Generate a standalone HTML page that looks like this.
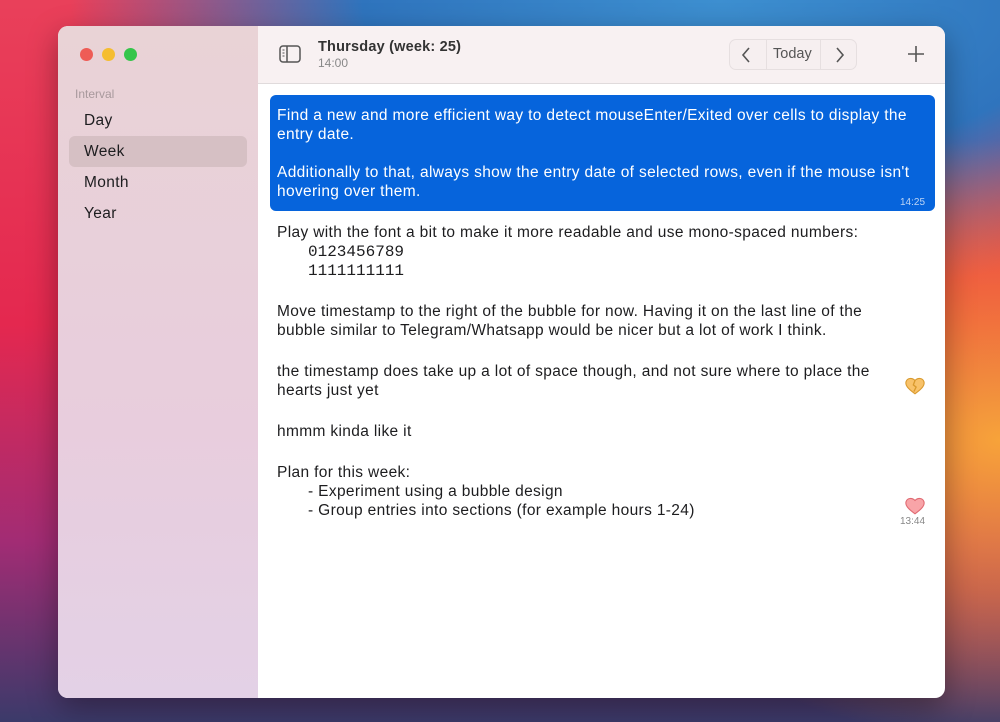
<!DOCTYPE html>
<html><head><meta charset="utf-8"><style>
*{margin:0;padding:0;box-sizing:border-box}
body{width:1000px;height:722px;overflow:hidden;position:relative;font-family:"Liberation Sans",sans-serif;
background:
radial-gradient(ellipse 420px 300px at 1000px 440px,#f7a33a 0%,rgba(247,140,50,0.6) 50%,rgba(0,0,0,0) 100%),
radial-gradient(ellipse 650px 300px at 720px 0px,#3d8fd0 0%,#2f74bd 55%,rgba(0,0,0,0) 100%),
linear-gradient(180deg,#e9405a 0%,#e4284f 45%,#a22c74 75%,#3b3a6a 100%);}
.win{position:absolute;left:58px;top:26px;width:887px;height:672px;border-radius:10px;overflow:hidden;background:#fff;box-shadow:0 10px 30px rgba(0,0,0,.35)}
.side{position:absolute;left:0;top:0;width:200px;height:672px;background:linear-gradient(180deg,#e9d3d6 0%,#e8cddd 60%,#e3d1e6 100%)}
.dot{position:absolute;top:22px;width:13px;height:13px;border-radius:50%}
.hdr{position:absolute;left:200px;top:0;right:0;height:58px;background:#f8f1f2;border-bottom:1px solid #e0dbdc}
.t{position:absolute;white-space:nowrap;font-size:15.5px;letter-spacing:0.35px;color:#1d1d1f}
.b{color:#fff}
.m{font-family:"Liberation Mono",monospace;font-size:16px;letter-spacing:0}
</style></head><body>
<div class="win">
 <div class="side">
  <div class="dot" style="left:22px;background:#ee5c56"></div>
  <div class="dot" style="left:44px;background:#f5bd30"></div>
  <div class="dot" style="left:66px;background:#35c54a"></div>
  <div class="t" style="left:17px;top:61px;font-size:12px;letter-spacing:0;color:#a8999c">Interval</div>
  <div style="position:absolute;left:11px;top:110px;width:178px;height:31px;border-radius:6px;background:#d6c0c4"></div>
  <div class="t" style="left:26px;top:86px">Day</div>
  <div class="t" style="left:26px;top:117px">Week</div>
  <div class="t" style="left:26px;top:148px">Month</div>
  <div class="t" style="left:26px;top:179px">Year</div>
 </div>
 <div class="hdr">
  <svg style="position:absolute;left:21px;top:19px" width="22" height="18" viewBox="0 0 22 18"><rect x="1" y="1" width="20" height="16" rx="3" fill="none" stroke="#555" stroke-width="1.5"/><line x1="8" y1="1" x2="8" y2="17" stroke="#555" stroke-width="1.5"/><line x1="3.5" y1="5" x2="5.5" y2="5" stroke="#555"/><line x1="3.5" y1="8" x2="5.5" y2="8" stroke="#555"/><line x1="3.5" y1="11" x2="5.5" y2="11" stroke="#555"/></svg>
  <div class="t" style="left:60px;top:13px;font-weight:bold;font-size:14.5px;letter-spacing:0.2px;color:#333">Thursday (week: 25)</div>
  <div class="t" style="left:60px;top:30px;font-size:12px;letter-spacing:0;color:#888">14:00</div>
  <div style="position:absolute;left:471px;top:13px;width:128px;height:31px;border:1px solid #e6dfe0;border-radius:7px;background:#f6eff0">
   <div style="position:absolute;left:36px;top:0;width:1px;height:29px;background:#e6dfe0"></div>
   <div style="position:absolute;left:90px;top:0;width:1px;height:29px;background:#e6dfe0"></div>
   <svg style="position:absolute;left:10px;top:6px" width="12" height="18"><path d="M9 2 L3 9 L9 16" fill="none" stroke="#555" stroke-width="1.6"/></svg>
   <div class="t" style="left:43px;top:6px;font-size:14.5px;letter-spacing:0;color:#555">Today</div>
   <svg style="position:absolute;left:104px;top:6px" width="12" height="18"><path d="M3 2 L9 9 L3 16" fill="none" stroke="#555" stroke-width="1.6"/></svg>
  </div>
  <svg style="position:absolute;left:649px;top:19px" width="18" height="18"><path d="M9 1V17M1 9H17" stroke="#555" stroke-width="1.6"/></svg>
 </div>
 <div style="position:absolute;left:212px;top:69px;width:665px;height:116px;border-radius:6px;background:#0664dc"></div>
 <div class="t b" style="left:219px;top:81px">Find a new and more efficient way to detect mouseEnter/Exited over cells to display the</div>
 <div class="t b" style="left:219px;top:100px">entry date.</div>
 <div class="t b" style="left:219px;top:138px">Additionally to that, always show the entry date of selected rows, even if the mouse isn't</div>
 <div class="t b" style="left:219px;top:157px">hovering over them.</div>
 <div class="t" style="left:842px;top:171px;font-size:10px;letter-spacing:0;color:#bcd4f5">14:25</div>
 <div class="t" style="left:219px;top:198px">Play with the font a bit to make it more readable and use mono-spaced numbers:</div>
 <div class="t m" style="left:250px;top:217px">0123456789</div>
 <div class="t m" style="left:250px;top:236px">1111111111</div>
 <div class="t" style="left:219px;top:277px">Move timestamp to the right of the bubble for now. Having it on the last line of the</div>
 <div class="t" style="left:219px;top:296px">bubble similar to Telegram/Whatsapp would be nicer but a lot of work I think.</div>
 <div class="t" style="left:219px;top:337px">the timestamp does take up a lot of space though, and not sure where to place the</div>
 <div class="t" style="left:219px;top:356px">hearts just yet</div>
 <svg style="position:absolute;left:847px;top:351px" width="20" height="18" viewBox="0 0 18 16"><path d="M9 15 C2 10 0 7 1 4 C2 1 6 0 9 3 C12 0 16 1 17 4 C18 7 16 10 9 15Z" fill="#f8c26a" stroke="#d99a2e" stroke-width="1"/><path d="M9 3 L7.5 7 L10 9 L8 13" fill="none" stroke="#d99a2e" stroke-width="1.2"/></svg>
 <div class="t" style="left:219px;top:397px">hmmm kinda like it</div>
 <div class="t" style="left:219px;top:438px">Plan for this week:</div>
 <div class="t" style="left:250px;top:457px">- Experiment using a bubble design</div>
 <div class="t" style="left:250px;top:476px">- Group entries into sections (for example hours 1-24)</div>
 <svg style="position:absolute;left:847px;top:471px" width="20" height="18" viewBox="0 0 18 16"><path d="M9 15 C2 10 0 7 1 4 C2 1 6 0 9 3 C12 0 16 1 17 4 C18 7 16 10 9 15Z" fill="#f8a4a8" stroke="#e06a72" stroke-width="1"/></svg>
 <div class="t" style="left:842px;top:490px;font-size:10px;letter-spacing:0;color:#888">13:44</div>
</div>
</body></html>
